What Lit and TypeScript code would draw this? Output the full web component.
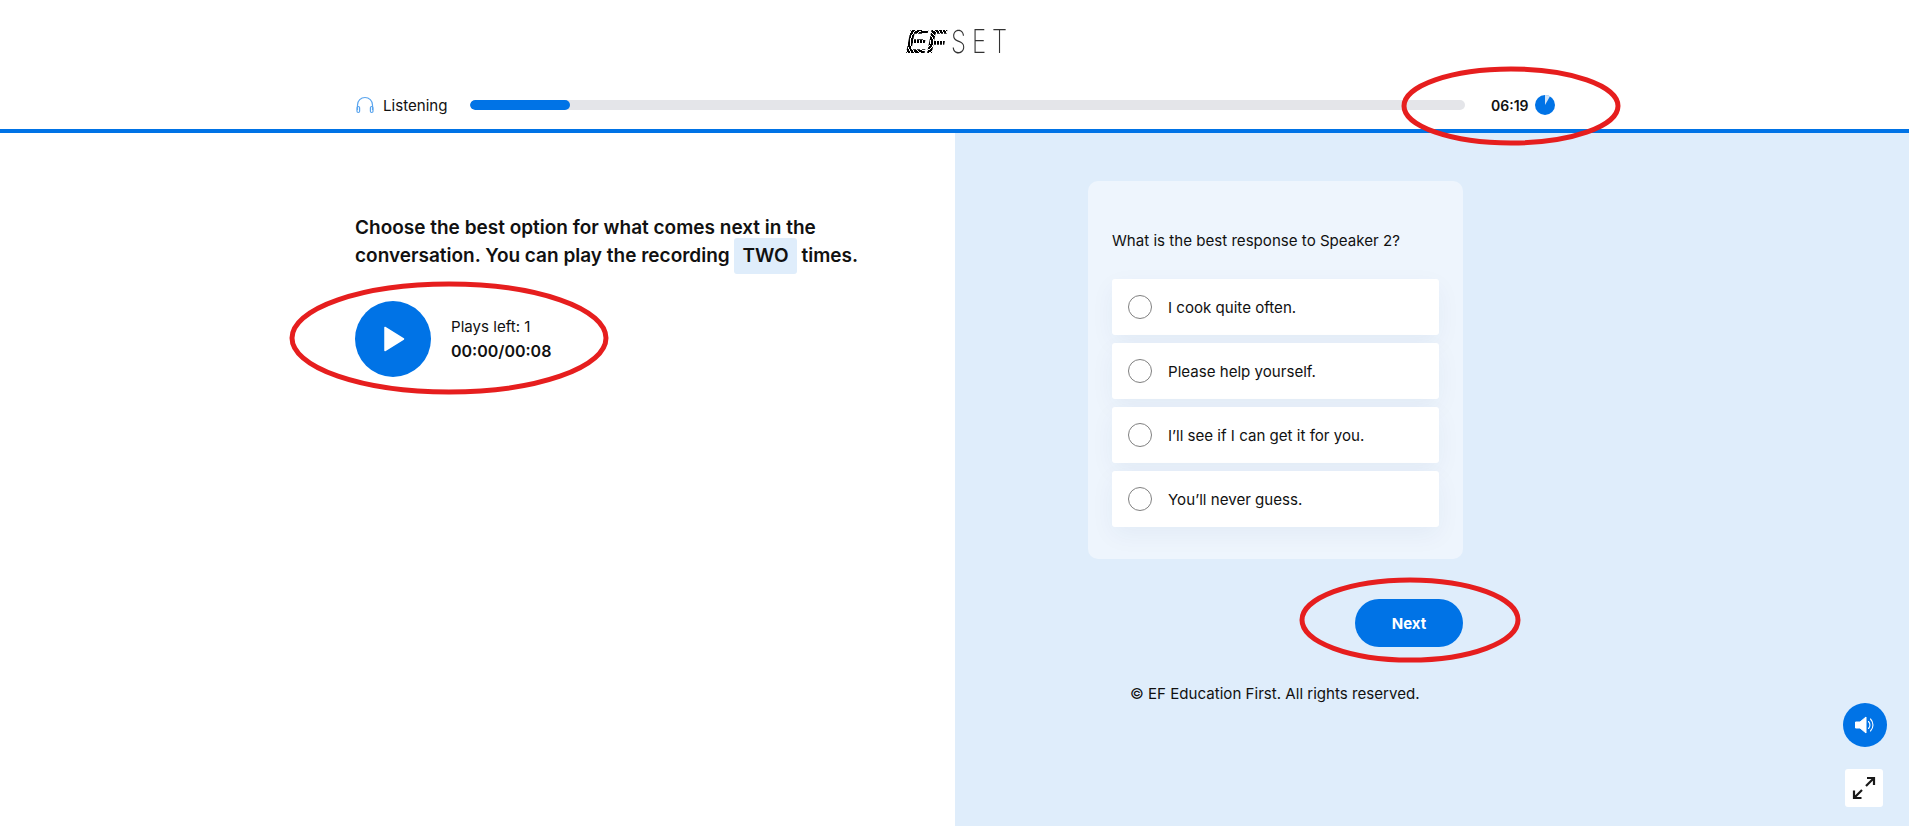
import { LitElement, html, css, svg } from "lit";
import { customElement } from "lit/decorators.js";

const OPTIONS = ["I cook quite often.", "Please help yourself.", "I’ll see if I can get it for you.", "You’ll never guess."];

@customElement("app-root")
export class AppRoot extends LitElement {
  static styles = css`
    :host { display: block; position: relative; width: 1909px; height: 826px; overflow: hidden; background: #fff; color: #111; font-family: Inter, "Liberation Sans", sans-serif; font-size: 15.1px; }
    header { height: 129px; border-bottom: 4px solid #0073e6; display: flex; flex-direction: column; align-items: center; }
    .logo { display: flex; align-items: center; height: 24px; margin-top: 30px; line-height: 24px; width: 98px; }
    .ef { width: 45px; flex: none; font: italic 700 33px/24px "Liberation Sans", sans-serif; letter-spacing: -1px; color: transparent; background: repeating-radial-gradient(circle at 19px 12px, #000 0 2.2px, #fff 2.2px 3px); -webkit-background-clip: text; background-clip: text; }
    .set { flex: none; display: inline-block; font: 200 32px/24px Inter, sans-serif; letter-spacing: 8px; color: #333; transform: scaleX(0.75); transform-origin: left center; white-space: nowrap; }
    .status { width: 100%; box-sizing: border-box; display: flex; align-items: center; padding-left: 355px; margin-top: 37px; height: 28px; }
    .head-icon { width: 20px; height: 20px; margin-right: 8px; flex: none; }
    .label { width: 87px; }
    .track { width: 995px; height: 10px; border-radius: 5px; background: #e4e5e9; overflow: hidden; }
    .fill { height: 100%; width: 100px; border-radius: 5px; background: #0073e6; }
    .time { margin-left: 26px; font-size: 14px; font-weight: 600; width: 44px; }
    .pie { width: 20px; height: 20px; }
    main { display: grid; grid-template-columns: 955px 954px; height: 693px; }
    .left { padding: 81px 0 0 355px; }
    h1 { margin: 0; width: 530px; font-size: 19px; line-height: 28px; font-weight: 600; }
    .chip { display: inline-block; background: #dfedfb; border-radius: 3px; padding: 4px 8px; margin: -4px 0; }
    .player { display: flex; align-items: center; margin-top: 31px; }
    .play { width: 76px; height: 76px; border-radius: 50%; background: #0073e6; display: flex; align-items: center; justify-content: center; flex: none; }
    .meta { margin-left: 20px; display: flex; flex-direction: column; gap: 6px; line-height: 18px; }
    .count { font-size: 16px; font-weight: 600; }
    .right { background: #dfedfb; padding: 48px 0 0 133px; }
    .card { width: 375px; box-sizing: border-box; padding: 48px 24px 32px; background: #eef5fd; border-radius: 10px; }
    .q { line-height: 24px; margin-bottom: 26px; }
    .opts { display: flex; flex-direction: column; gap: 8px; }
    .opt { height: 56px; background: #fff; border-radius: 3px; display: flex; align-items: center; padding-left: 16px; box-shadow: 0 8px 24px rgba(25, 60, 110, 0.05); }
    .radio { width: 24px; height: 24px; box-sizing: border-box; border: 1px solid #808080; border-radius: 50%; margin-right: 16px; }
    .next-row { width: 375px; display: flex; justify-content: flex-end; margin-top: 40px; }
    .next { width: 108px; height: 48px; border: 0; border-radius: 24px; background: #0073e6; color: #fff; font: 700 15px Inter, sans-serif; }
    .copy { margin: 35px 0 0 42px; line-height: 24px; }
    .vol { position: absolute; left: 1843px; top: 703px; width: 44px; height: 44px; border-radius: 50%; background: #0073e6; display: flex; align-items: center; justify-content: center; }
    .full { position: absolute; left: 1845px; top: 769px; width: 38px; height: 38px; border-radius: 3px; background: #fff; display: flex; align-items: center; justify-content: center; }
    .marks { position: absolute; left: 0; top: 0; pointer-events: none; }
  `;

  render() {
    return html`
      <header>
        <div class="logo"><span class="ef">EF</span><span class="set">SET</span></div>
        <div class="status">
          <svg class="head-icon" viewBox="0 0 20 20" fill="none" stroke="#5aa5ee" stroke-width="1.2">
            <path d="M2.5 15V10a7.5 7.5 0 0 1 15 0v5" />
            <rect x="2" y="11.5" width="2.6" height="6" rx="1.2" />
            <rect x="15.4" y="11.5" width="2.6" height="6" rx="1.2" />
          </svg>
          <span class="label">Listening</span>
          <div class="track"><div class="fill"></div></div>
          <span class="time">06:19</span>
          <svg class="pie" viewBox="0 0 20 20">
            <circle cx="10" cy="10" r="10" fill="#0073e6" />
            <path d="M10 10V0a10 10 0 0 1 5 1.34z" fill="#cfe3f8" />
          </svg>
        </div>
      </header>
      <main>
        <section class="left">
          <h1>Choose the best option for what comes next in the conversation. You can play the recording <span class="chip">TWO</span> times.</h1>
          <div class="player">
            <div class="play">
              <svg width="24" height="28" viewBox="0 0 24 28"><path d="M4 2.5v23L22.5 14z" fill="#fff" stroke="#fff" stroke-width="1.5" stroke-linejoin="round" /></svg>
            </div>
            <div class="meta"><span>Plays left: 1</span><span class="count">00:00/00:08</span></div>
          </div>
        </section>
        <section class="right">
          <div class="card">
            <div class="q">What is the best response to Speaker 2?</div>
            <div class="opts">
              ${OPTIONS.map((o) => html`<div class="opt"><span class="radio"></span><span>${o}</span></div>`)}
            </div>
          </div>
          <div class="next-row"><button class="next">Next</button></div>
          <div class="copy">© EF Education First. All rights reserved.</div>
        </section>
      </main>
      <div class="vol">
        <svg width="24" height="24" viewBox="0 0 24 24" fill="none">
          <path d="M2.5 9H7l6-5v16l-6-5H2.5z" fill="#fff" stroke="#fff" stroke-linejoin="round" />
          <path d="M15.5 8.5a5 5 0 0 1 0 7M17.5 6a8.5 8.5 0 0 1 0 12" stroke="#fff" stroke-width="1.1" stroke-linecap="round" />
        </svg>
      </div>
      <div class="full">
        <svg width="26" height="26" viewBox="0 0 26 26" fill="none" stroke="#191919" stroke-width="2.2">
          <path d="M15 11l8-8M16 3h7v7M11 15l-8 8M3 15.5V23h7.5" />
        </svg>
      </div>
      <svg class="marks" width="1909" height="826" fill="none" stroke="#e61e1e" stroke-width="5">
        ${svg`<ellipse cx="1511" cy="106" rx="107" ry="37" />
        <ellipse cx="449" cy="338" rx="157" ry="54" />
        <ellipse cx="1410" cy="620" rx="108" ry="40" />`}
      </svg>
    `;
  }
}
